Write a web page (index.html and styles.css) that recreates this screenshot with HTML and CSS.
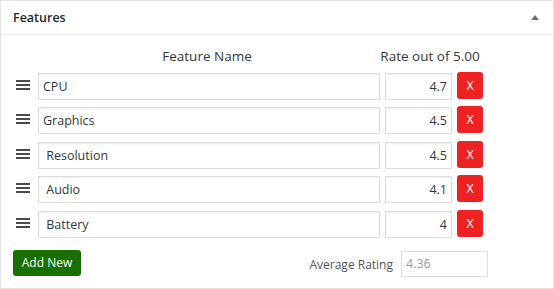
FILE: index.html
```html
<!DOCTYPE html>
<html>
<head>
<meta charset="utf-8">
<link rel="stylesheet" href="styles.css">
</head>
<body>
<div class="panel">
  <div class="panel-head">
    <span class="panel-title">Features</span>
    <span class="toggle"></span>
  </div>
  <div class="panel-body">
    <div class="grid">
      <div class="col-head name-head">Feature Name</div>
      <div class="col-head rate-head">Rate out of 5.00</div>

      <span class="handle"><i></i><i></i><i></i></span>
      <input class="field name" type="text" value="CPU">
      <input class="field rate" type="text" value="4.7">
      <button class="del">X</button>

      <span class="handle"><i></i><i></i><i></i></span>
      <input class="field name" type="text" value="Graphics">
      <input class="field rate" type="text" value="4.5">
      <button class="del">X</button>

      <span class="handle"><i></i><i></i><i></i></span>
      <input class="field name" type="text" value=" Resolution">
      <input class="field rate" type="text" value="4.5">
      <button class="del">X</button>

      <span class="handle"><i></i><i></i><i></i></span>
      <input class="field name" type="text" value=" Audio">
      <input class="field rate" type="text" value="4.1">
      <button class="del">X</button>

      <span class="handle"><i></i><i></i><i></i></span>
      <input class="field name" type="text" value=" Battery">
      <input class="field rate" type="text" value="4">
      <button class="del">X</button>
    </div>
    <div class="footer">
      <button class="add">Add New</button>
      <div class="avg">
        <span class="avg-label">Average Rating</span>
        <input class="field avg-field" type="text" value="4.36" readonly>
      </div>
    </div>
  </div>
</div>
</body>
</html>
```

FILE: styles.css
```css
html, body {
  margin: 0;
  padding: 0;
  background: #fff;
}
body {
  font-family: "Open Sans", "Segoe UI", sans-serif;
  font-size: 12.5px;
  color: #32373c;
}
.panel {
  width: 554px;
  height: 289px;
  box-sizing: border-box;
  border: 1px solid #e5e5e5;
  background: #fff;
}
.panel-head {
  height: 33px;
  border-bottom: 1px solid #eeeeee;
  display: flex;
  align-items: center;
  justify-content: space-between;
  padding: 0 14px 0 12px;
}
.panel-title {
  font-size: 12.5px;
  font-weight: 600;
  color: #23282d;
}
.toggle {
  width: 0;
  height: 0;
  border-left: 4px solid transparent;
  border-right: 4px solid transparent;
  border-bottom: 5px solid #6b6f73;
  margin-top: -1px;
}
.panel-body {
  padding: 12px 0 0 12px;
}
.grid {
  display: grid;
  grid-template-columns: 20px 342px 67px 26px;
  column-gap: 5px;
  row-gap: 7.5px;
  width: 475px;
}
.col-head {
  font-size: 13.5px;
  color: #32373c;
  line-height: 18px;
  margin-bottom: 0;
}
.name-head {
  grid-column: 2;
  text-align: center;
  padding-right: 4px;
}
.rate-head {
  grid-column: 3 / span 2;
  text-align: center;
  margin-left: -5px;
  padding-right: 3px;
}
.handle {
  display: flex;
  flex-direction: column;
  justify-content: center;
  gap: 2px;
  padding-left: 3px;
  padding-bottom: 3px;
}
.handle i {
  display: block;
  width: 14px;
  height: 2px;
  background: #4a4a4a;
}
.field {
  box-sizing: border-box;
  height: 27px;
  border: 1px solid #dddddd;
  box-shadow: inset 0 1px 2px rgba(0, 0, 0, 0.07);
  background: #fff;
  font-family: "Open Sans", "Segoe UI", sans-serif;
  font-size: 12.5px;
  color: #32373c;
  padding: 0 4px;
  margin: 0;
  outline: none;
  white-space: pre;
}
.name {
  width: 342px;
}
.rate {
  width: 67px;
  text-align: right;
  padding-right: 4px;
}
.del {
  box-sizing: border-box;
  width: 26px;
  height: 27px;
  margin: -1px 0 0 0;
  border: none;
  border-radius: 3px;
  background: #ee2222;
  color: #fff;
  font-family: "Open Sans", "Segoe UI", sans-serif;
  font-size: 12.5px;
  padding: 0;
  cursor: pointer;
}
.footer {
  display: flex;
  justify-content: space-between;
  align-items: flex-end;
  width: 475px;
  margin-top: 12px;
}
.add {
  box-sizing: border-box;
  width: 68px;
  height: 26px;
  border: none;
  border-radius: 3px;
  background: #197000;
  color: #fff;
  font-family: "Open Sans", "Segoe UI", sans-serif;
  font-size: 12px;
  padding: 0;
}
.avg {
  display: flex;
  align-items: center;
  gap: 8px;
  margin-bottom: -1px;
}
.avg-label {
  color: #50575e;
  font-size: 12px;
  padding-top: 2px;
}
.avg-field {
  width: 87px;
  height: 26px;
  color: #999;
  box-shadow: none;
}
```
